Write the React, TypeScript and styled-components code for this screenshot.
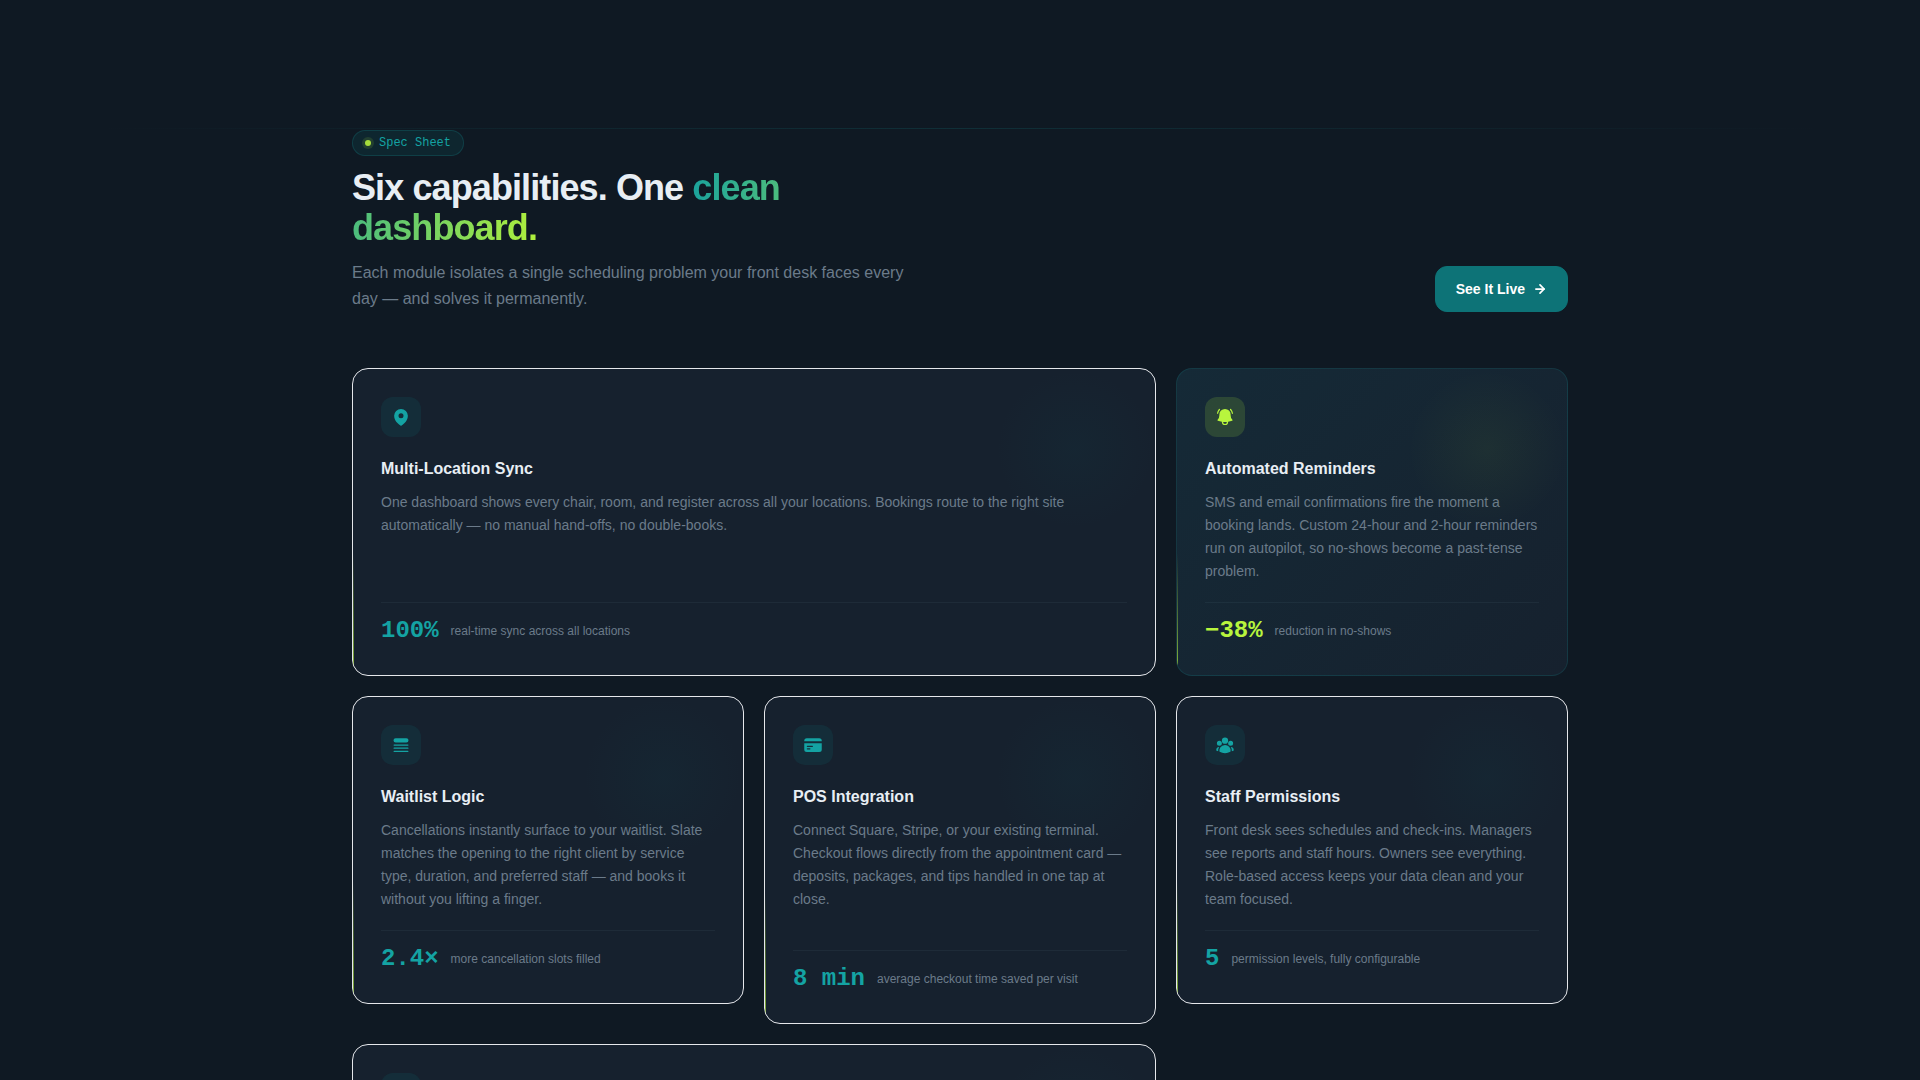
import React from "react";
import styled, { createGlobalStyle } from "styled-components";
import { ArrowRight } from "lucide-react";
import {
  HiBellAlert,
  HiCreditCard,
  HiMapPin,
  HiQueueList,
  HiUserGroup,
} from "react-icons/hi2";

const sans = `"Liberation Sans", Arial, sans-serif`;
const mono = `"Liberation Mono", "Courier New", monospace`;

const color = {
  page: "#0f1923",
  card: "#16212e",
  line: "#e5e7eb",
  heading: "#e8eef4",
  muted: "#6b7b8a",
  teal: "#14a3a3",
  tealDeep: "#0d7377",
  lime: "#b8f53d",
};

const GlobalStyle = createGlobalStyle`
  *, *::before, *::after { box-sizing: border-box; }
  body {
    margin: 0;
    background: ${color.page};
    color: ${color.heading};
    font-family: ${sans};
  }
  h2, h3, p { margin: 0; }
`;

const Page = styled.main`
  height: 100vh;
  overflow: hidden;
  padding-top: 128px;
`;

const Rule = styled.div`
  height: 1px;
  margin: 0 5% 1px;
  background: linear-gradient(90deg, transparent, rgba(20, 163, 163, 0.16), transparent);
`;

const Container = styled.section`
  max-width: 1280px;
  margin: 0 auto;
  padding: 0 32px;
`;

const Header = styled.header`
  display: flex;
  align-items: flex-end;
  justify-content: space-between;
  gap: 24px;
  margin-bottom: 56px;
`;

const Intro = styled.div`
  display: flex;
  flex-direction: column;
  align-items: flex-start;
  gap: 12px;
  max-width: 576px;
`;

const Badge = styled.span`
  display: inline-flex;
  align-items: center;
  gap: 8px;
  padding: 4px 12px;
  border: 1px solid rgba(20, 163, 163, 0.2);
  border-radius: 999px;
  background: rgba(13, 115, 119, 0.15);
  color: ${color.teal};
  font: 400 12px/16px ${mono};
`;

const Dot = styled.span`
  width: 6px;
  height: 6px;
  border-radius: 50%;
  background: #a5dc3b;
  box-shadow: 0 0 0 3px rgba(184, 245, 61, 0.12);
`;

const Heading = styled.h2`
  font-size: 36px;
  line-height: 40px;
  font-weight: 700;
  letter-spacing: -0.025em;
`;

const Gradient = styled.span`
  background: linear-gradient(90deg, #1ba39c, #b0f03c);
  background-clip: text;
  -webkit-background-clip: text;
  color: transparent;
`;

const Lead = styled.p`
  color: ${color.muted};
  font-size: 16px;
  line-height: 26px;
`;

const Button = styled.button`
  display: inline-flex;
  align-items: center;
  flex-shrink: 0;
  gap: 8px;
  padding: 12px 20px;
  border: 1px solid ${color.tealDeep};
  border-radius: 12px;
  background: ${color.tealDeep};
  color: #fff;
  font: 600 14px/20px ${sans};
  cursor: pointer;
`;

const Grid = styled.div`
  display: grid;
  grid-template-columns: repeat(3, minmax(0, 1fr));
  align-items: start;
  gap: 20px;
`;

const Card = styled.article<{ $wide?: boolean; $tall?: boolean; $accent?: boolean }>`
  position: relative;
  display: flex;
  flex-direction: column;
  grid-column: span ${(p) => (p.$wide ? 2 : 1)};
  min-height: ${(p) => (p.$tall ? 328 : 308)}px;
  padding: 28px;
  overflow: hidden;
  border: 1px solid ${(p) => (p.$accent ? "rgba(20, 163, 163, 0.16)" : color.line)};
  border-radius: 16px;
  background: ${(p) =>
    p.$accent ? `linear-gradient(135deg, #152a37 0%, ${color.card} 100%)` : color.card};

  &::before {
    content: "";
    position: absolute;
    top: 0;
    right: 0;
    width: 160px;
    height: 160px;
    background: radial-gradient(
      circle,
      ${(p) => (p.$accent ? "rgba(184, 245, 61, 0.05)" : "rgba(13, 115, 119, 0.06)")},
      transparent 70%
    );
  }

  &::after {
    content: "";
    position: absolute;
    left: 0;
    bottom: 0;
    width: 1px;
    height: 40%;
    background: linear-gradient(to top, ${color.lime}, transparent);
    opacity: 0.7;
  }
`;

const IconTile = styled.span<{ $accent?: boolean }>`
  display: grid;
  place-items: center;
  width: 40px;
  height: 40px;
  margin-bottom: 20px;
  border-radius: 12px;
  background: ${(p) => (p.$accent ? "rgba(184, 245, 61, 0.15)" : "rgba(13, 115, 119, 0.16)")};
  color: ${(p) => (p.$accent ? color.lime : color.teal)};
`;

const Title = styled.h3`
  margin-bottom: 10px;
  font-size: 16px;
  line-height: 24px;
  font-weight: 700;
`;

const Description = styled.p`
  color: ${color.muted};
  font-size: 14px;
  line-height: 23px;
`;

const Metric = styled.div`
  display: flex;
  align-items: center;
  gap: 12px;
  margin-top: auto;
  padding-top: 12px;
  border-top: 1px solid rgba(148, 190, 200, 0.07);
`;

const Value = styled.strong<{ $accent?: boolean }>`
  color: ${(p) => (p.$accent ? color.lime : color.teal)};
  font: 700 24px/32px ${mono};
`;

const Label = styled.span`
  color: ${color.muted};
  font-size: 12px;
  line-height: 16px;
`;

const features = [
  {
    icon: HiMapPin,
    title: "Multi-Location Sync",
    text: "One dashboard shows every chair, room, and register across all your locations. Bookings route to the right site automatically — no manual hand-offs, no double-books.",
    value: "100%",
    label: "real-time sync across all locations",
    wide: true,
  },
  {
    icon: HiBellAlert,
    title: "Automated Reminders",
    text: "SMS and email confirmations fire the moment a booking lands. Custom 24-hour and 2-hour reminders run on autopilot, so no-shows become a past-tense problem.",
    value: "−38%",
    label: "reduction in no-shows",
    accent: true,
  },
  {
    icon: HiQueueList,
    title: "Waitlist Logic",
    text: "Cancellations instantly surface to your waitlist. Slate matches the opening to the right client by service type, duration, and preferred staff — and books it without you lifting a finger.",
    value: "2.4×",
    label: "more cancellation slots filled",
  },
  {
    icon: HiCreditCard,
    title: "POS Integration",
    text: "Connect Square, Stripe, or your existing terminal. Checkout flows directly from the appointment card — deposits, packages, and tips handled in one tap at close.",
    value: "8 min",
    label: "average checkout time saved per visit",
    tall: true,
  },
  {
    icon: HiUserGroup,
    title: "Staff Permissions",
    text: "Front desk sees schedules and check-ins. Managers see reports and staff hours. Owners see everything. Role-based access keeps your data clean and your team focused.",
    value: "5",
    label: "permission levels, fully configurable",
  },
];

export default function App() {
  return (
    <>
      <GlobalStyle />
      <Page>
        <Rule />
        <Container>
          <Header>
            <Intro>
              <Badge>
                <Dot />
                Spec Sheet
              </Badge>
              <Heading>
                Six capabilities. One <Gradient>clean dashboard.</Gradient>
              </Heading>
              <Lead>
                Each module isolates a single scheduling problem your front desk faces every day —
                and solves it permanently.
              </Lead>
            </Intro>
            <Button type="button">
              See It Live
              <ArrowRight size={14} strokeWidth={3} aria-hidden />
            </Button>
          </Header>
          <Grid>
            {features.map(({ icon: Icon, title, text, value, label, wide, accent, tall }) => (
              <Card key={title} $wide={wide} $accent={accent} $tall={tall}>
                <IconTile $accent={accent}>
                  <Icon size={20} aria-hidden />
                </IconTile>
                <Title>{title}</Title>
                <Description>{text}</Description>
                <Metric>
                  <Value $accent={accent}>{value}</Value>
                  <Label>{label}</Label>
                </Metric>
              </Card>
            ))}
            <Card $wide>
              <IconTile />
            </Card>
          </Grid>
        </Container>
      </Page>
    </>
  );
}
